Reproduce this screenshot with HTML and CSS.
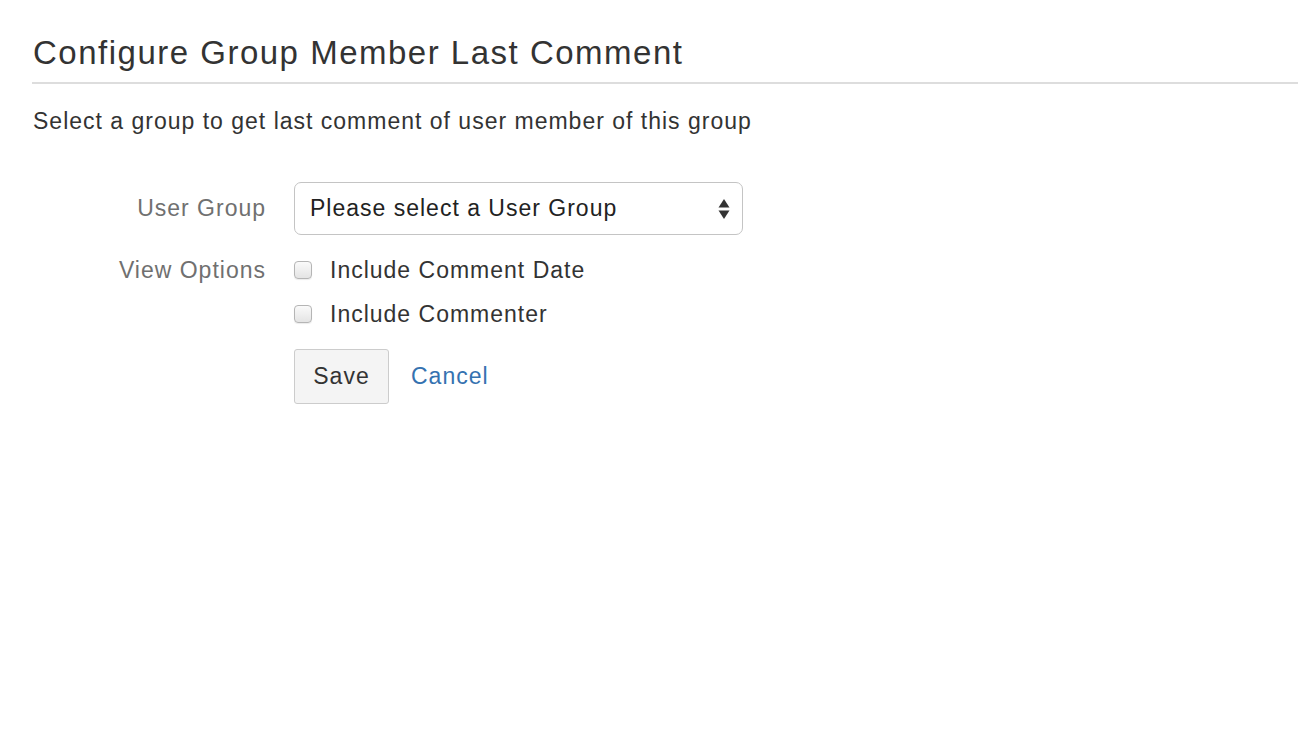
FILE: index.html
```html
<!DOCTYPE html>
<html>
<head>
<meta charset="utf-8">
<link rel="stylesheet" href="styles.css">
</head>
<body>
<div class="page">
  <h1 class="title">Configure Group Member Last Comment</h1>
  <p class="intro">Select a group to get last comment of user member of this group</p>
  <form class="form">
    <div class="row row-select">
      <label class="label">User Group</label>
      <div class="select">
        <span class="select-text">Please select a User Group</span>
        <svg class="select-arrows" width="12" height="22" viewBox="0 0 12 22"><path d="M6 1 L11.5 9.5 H0.5 Z" fill="#333"/><path d="M6 21 L11.5 12.5 H0.5 Z" fill="#333"/></svg>
      </div>
    </div>
    <div class="row row-check">
      <span class="label">View Options</span>
      <div class="checks">
        <label class="check"><span class="box"></span><span>Include Comment Date</span></label>
        <label class="check"><span class="box"></span><span>Include Commenter</span></label>
      </div>
    </div>
    <div class="row row-buttons">
      <span class="label"></span>
      <div class="buttons">
        <button type="button" class="btn">Save</button>
        <a class="cancel" href="#">Cancel</a>
      </div>
    </div>
  </form>
</div>
</body>
</html>
```
FILE: styles.css
```css
html, body {
  margin: 0;
  padding: 0;
  background: #fff;
}
body {
  font-family: "Liberation Sans", Arial, sans-serif;
  color: #333;
  letter-spacing: 1px;
}
.page {
  padding: 30px 0 0 32px;
}
.title {
  margin: 0;
  font-size: 33px;
  font-weight: normal;
  letter-spacing: 1.5px;
  line-height: 46px;
  color: #333;
  padding: 0 0 6px 1px;
  border-bottom: 2px solid #ddd;
}
.intro {
  margin: 20px 0 0 1px;
  font-size: 23px;
  line-height: 34px;
  color: #333;
}
.form {
  margin-top: 44px;
}
.row {
  display: flex;
  align-items: flex-start;
}
.label {
  width: 234px;
  flex: none;
  text-align: right;
  padding-right: 28px;
  font-size: 23px;
  color: #707070;
}
.row-select {
  align-items: center;
}
.select {
  width: 449px;
  height: 53px;
  box-sizing: border-box;
  border: 1px solid #c4c4c4;
  border-radius: 7px;
  display: flex;
  align-items: center;
  justify-content: space-between;
  padding: 0 12px 0 15px;
  font-size: 23px;
  color: #222;
}
.select-arrows {
  display: block;
}
.row-check {
  margin-top: 16px;
}
.row-check .label {
  line-height: 38px;
}
.checks {
  display: flex;
  flex-direction: column;
  gap: 6px;
}
.check {
  display: flex;
  align-items: center;
  height: 38px;
  font-size: 23px;
  color: #333;
}
.box {
  width: 18px;
  height: 18px;
  box-sizing: border-box;
  border: 1px solid #b5b5b5;
  border-radius: 4px;
  background: linear-gradient(#fafafa, #e4e4e4);
  margin-right: 18px;
  box-shadow: 0 1px 1px rgba(0,0,0,0.08);
}
.row-buttons {
  margin-top: 16px;
}
.buttons {
  display: flex;
  align-items: center;
}
.btn {
  width: 95px;
  height: 55px;
  box-sizing: border-box;
  border: 1px solid #ccc;
  border-radius: 3px;
  background: #f4f4f4;
  font-family: "Liberation Sans", Arial, sans-serif;
  font-size: 23px;
  letter-spacing: 1px;
  color: #333;
  padding: 0;
}
.cancel {
  margin-left: 22px;
  font-size: 23px;
  color: #3572b0;
  text-decoration: none;
}
```
